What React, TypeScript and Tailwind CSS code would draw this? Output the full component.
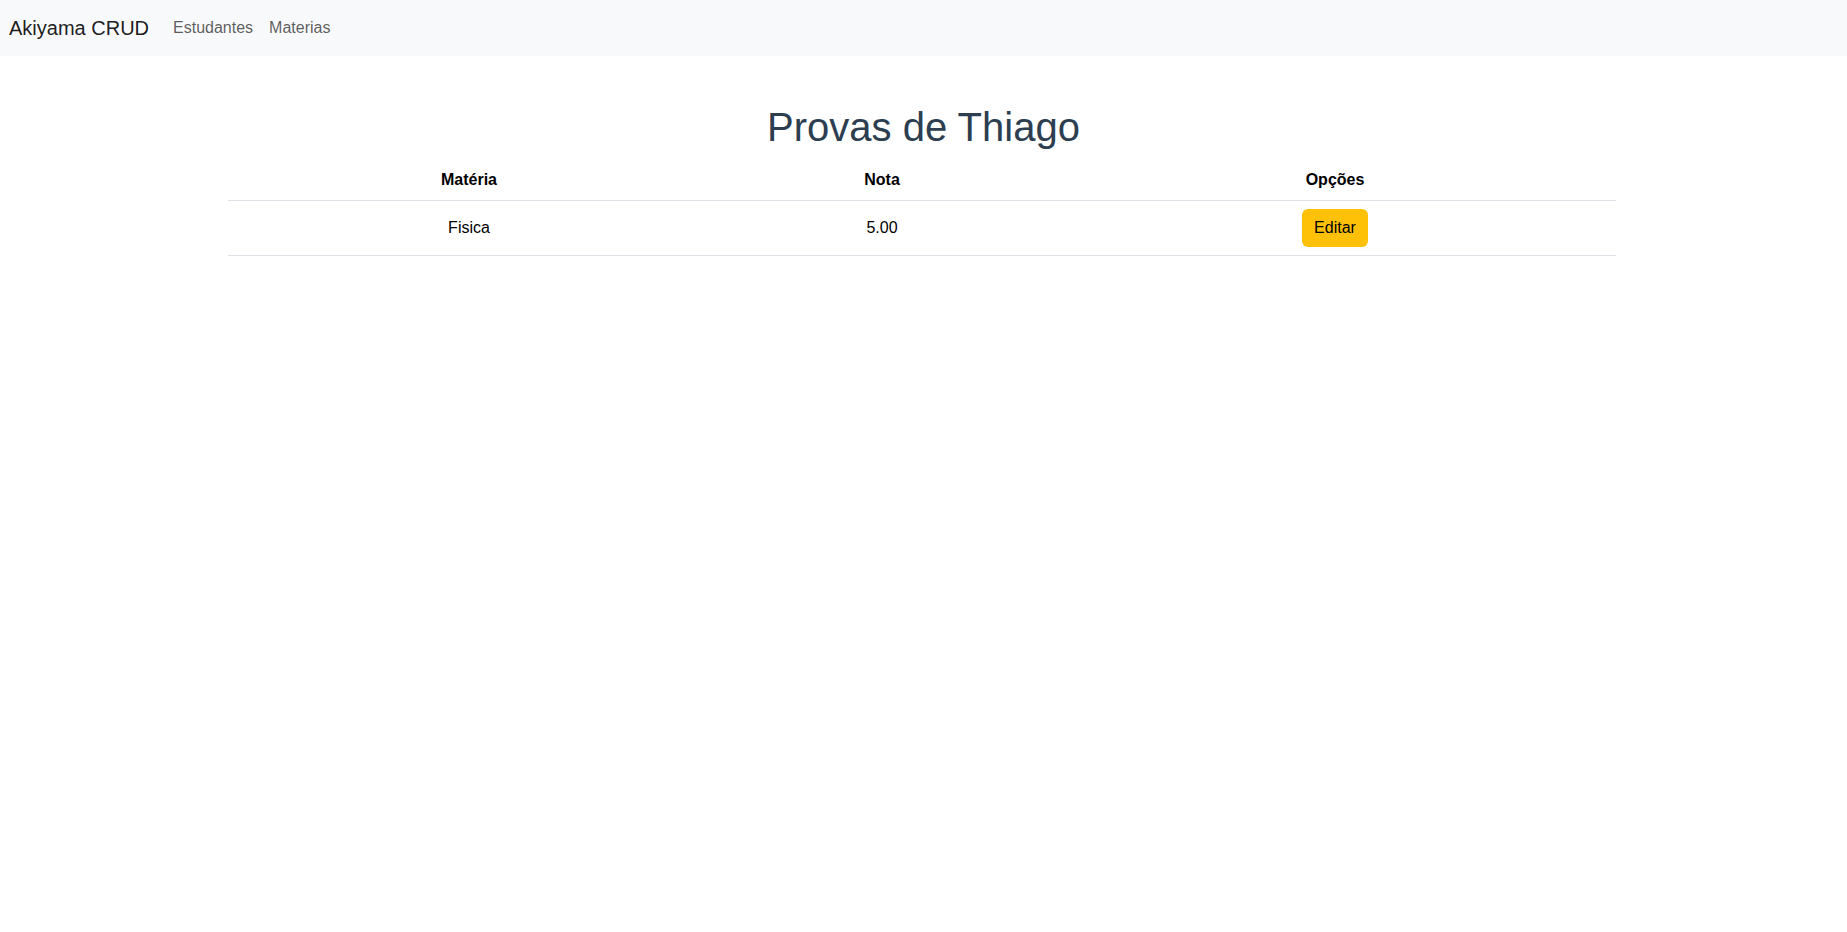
const rows = [{ materia: "Fisica", nota: "5.00" }];

export default function App() {
  return (
    <div className="min-h-[932px] bg-white font-['Liberation_Sans',Arial,sans-serif] text-black">
      {/* Navbar */}
      <nav className="flex h-[56px] items-center bg-[#f8f9fa] px-[9px]">
        <a href="#" className="mr-4 py-[5px] text-[20px] leading-[30px] text-black/90">
          Akiyama CRUD
        </a>
        <ul className="flex">
          <li>
            <a href="#" className="block px-2 py-2 text-base leading-6 text-black/65">
              Estudantes
            </a>
          </li>
          <li>
            <a href="#" className="block px-2 py-2 text-base leading-6 text-black/65">
              Materias
            </a>
          </li>
        </ul>
      </nav>

      <div className="text-center">
        <h1 className="mt-[47px] mb-[9px] text-[40px] leading-[48px] text-[#2c3e50]">
          Provas de Thiago
        </h1>

        <table className="ml-[228px] w-[1388px] border-collapse text-base leading-6">
          <thead>
            <tr className="border-b border-[#dee2e6]">
              <th className="w-[482px] p-2 font-bold">Matéria</th>
              <th className="w-[344px] p-2 font-bold">Nota</th>
              <th className="p-2 font-bold">Opções</th>
            </tr>
          </thead>
          <tbody>
            {rows.map((r) => (
              <tr key={r.materia} className="border-b border-[#dee2e6]">
                <td className="p-2 align-middle">{r.materia}</td>
                <td className="p-2 align-middle">{r.nota}</td>
                <td className="p-2 align-middle">
                  <button className="rounded-[6px] bg-[#ffc107] px-3 py-[7px] text-base leading-6 text-black">
                    Editar
                  </button>
                </td>
              </tr>
            ))}
          </tbody>
        </table>
      </div>
    </div>
  );
}
